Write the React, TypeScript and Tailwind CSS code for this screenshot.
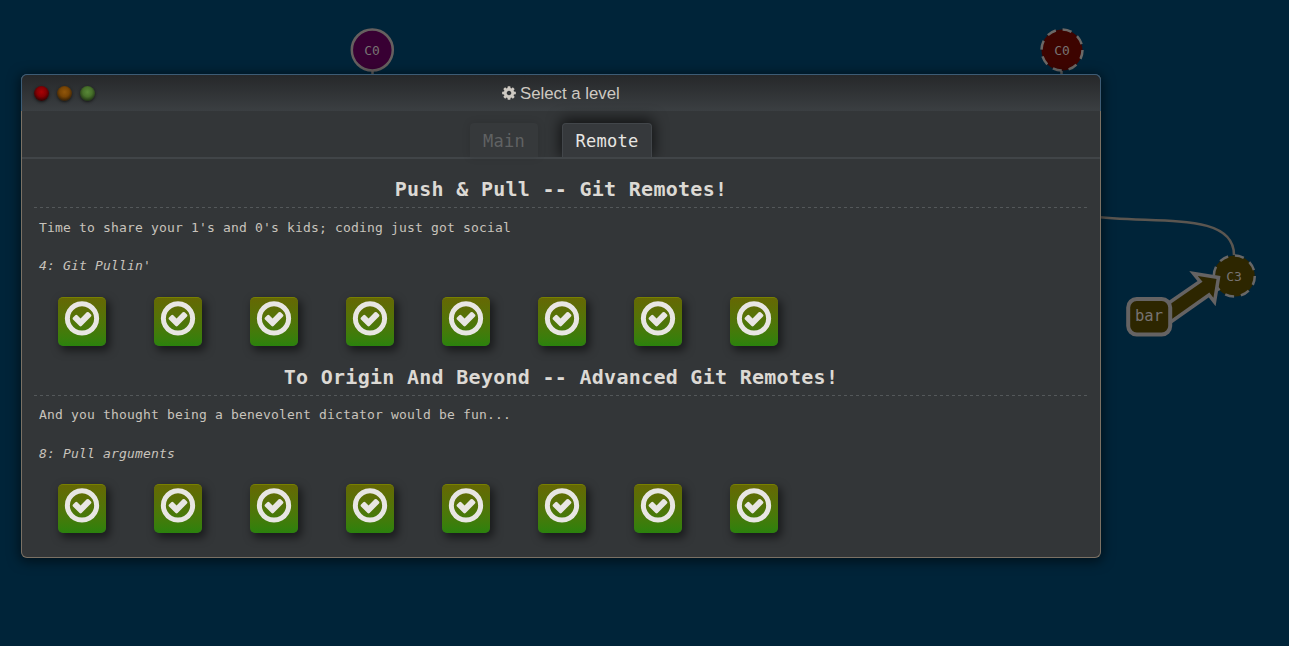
const CHECK =
  'M1299 813l-422 422q-19 19-45 19t-45-19l-294-294q-19-19-19-45t19-45l102-102q19-19 45-19t45 19l147 147 275-275q19-19 45-19t45 19l102 102q19 19 19 45t-19 45zm141 83q0-148-73-273t-198-198-273-73-273 73-198 198-73 273 73 273 198 198 273 73 273-73 198-198 73-273zm224 0q0 209-103 385.5t-279.5 279.5-385.5 103-385.5-103-279.5-279.5-103-385.5 103-385.5 279.5-279.5 385.5-103 385.5 103 279.5 279.5 103 385.5z';

const COG =
  'M1152 896q0-106-75-181t-181-75-181 75-75 181 75 181 181 75 181-75 75-181zm512-109v222q0 12-8 23t-20 13l-185 28q-19 54-39 91 35 50 107 138 10 12 10 25t-9 23q-27 37-99 108t-94 71q-12 0-26-9l-138-108q-44 23-91 38-16 136-29 186-7 28-36 28h-222q-14 0-24.5-8.5t-11.5-21.5l-28-184q-49-16-90-37l-141 107q-10 9-25 9-14 0-25-11-126-114-165-168-7-10-7-23 0-12 8-23 15-21 51-66.5t54-70.5q-27-50-41-99l-183-27q-13-2-21-12.5t-8-23.5v-222q0-12 8-23t19-13l186-28q14-46 39-92-40-57-107-138-10-12-10-24 0-10 9-23 26-36 98.5-107.5t94.5-71.5q13 0 26 10l138 107q44-23 91-38 16-136 29-186 7-28 36-28h222q14 0 24.5 8.5t11.5 21.5l28 184q49 16 90 37l142-107q9-9 24-9 13 0 25 10 129 119 165 170 7 8 7 22 0 12-8 23-15 21-51 66.5t-54 70.5q26 50 41 98l183 28q13 2 21 12.5t8 23.5z';

type Series = { title: string; about: string; level: string };

const SERIES: Series[] = [
  {
    title: 'Push & Pull -- Git Remotes!',
    about: "Time to share your 1's and 0's kids; coding just got social",
    level: "4: Git Pullin'",
  },
  {
    title: 'To Origin And Beyond -- Advanced Git Remotes!',
    about: 'And you thought being a benevolent dictator would be fun...',
    level: '8: Pull arguments',
  },
];

const LEVELS = [1, 2, 3, 4, 5, 6, 7, 8];

function CommitGraph() {
  return (
    <svg
      className="absolute inset-0 font-['DejaVu_Sans_Mono',monospace]"
      width="1289"
      height="646"
      viewBox="0 0 1289 646"
      fill="none"
    >
      <path d="M372.500 71V90M1061.500 71V90" stroke="#5b5b5b" strokeWidth="2.5" />
      <path d="M1090 216C1152 225 1234 210 1234 255" stroke="#5b5650" strokeWidth="2.5" />
      <circle cx="372.3" cy="50" r="20.5" fill="#380033" stroke="#66605f" strokeWidth="2.500" />
      <circle cx="1062" cy="50" r="20.5" fill="#3d0400" stroke="#6b6866" strokeWidth="2.500" strokeDasharray="9.2 6.9" />
      <circle cx="1234.3" cy="276" r="20.5" fill="#2d2600" stroke="#676767" strokeWidth="2.500" strokeDasharray="9.2 6.9" />
      <path
        d="M1160 309L1200 281.500L1193.500 273.500L1218.500 277.500L1214.500 302L1209 295L1163 327.500Z"
        fill="#2d2600"
        stroke="#656363"
        strokeWidth="3.5"
      />
      <rect x="1128.200" y="299" width="42" height="35.500" rx="8.500" fill="#2d2600" stroke="#656363" strokeWidth="4" />
      <g fill="#777372" textAnchor="middle" fontSize="13">
        <text x="372" y="55">C0</text>
        <text x="1062" y="55">C0</text>
        <text x="1234" y="281">C3</text>
        <text x="1149" y="321" fontSize="15.500">bar</text>
      </g>
    </svg>
  );
}

function WindowDots() {
  return (
    <div className="flex w-[479px] gap-2 pl-[11.5px] pt-px">
      <i className="size-[15px] rounded-full bg-[radial-gradient(circle_at_50%_40%,#a90205_0%,#850003_40%,#260404_80%,#1b1b1b_100%)] shadow-[0_1px_3px_#151515]" />
      <i className="size-[15px] rounded-full bg-[radial-gradient(circle_at_50%_40%,#91560a_0%,#794504_40%,#2b1b08_80%,#1b1b1b_100%)] shadow-[0_1px_3px_#151515]" />
      <i className="size-[15px] rounded-full bg-[radial-gradient(circle_at_50%_40%,#588838_0%,#47702a_40%,#1c2e12_80%,#1b1b1b_100%)] shadow-[0_1px_3px_#151515]" />
    </div>
  );
}

function LevelButton() {
  return (
    <button className="flex h-[49px] w-12 justify-center rounded-[5px] border-t border-[#788000] bg-linear-to-b from-[#656804] to-[#2a820d] shadow-[3px_4px_9px_1px_rgba(0,0,0,0.5)]">
      <svg className="shrink-0" width="40" height="40" viewBox="0 -20 1792 1792" fill="#e8e6e3">
        <path d={CHECK} />
      </svg>
    </button>
  );
}

function SeriesBlock({ title, about, level }: Series) {
  return (
    <section className="h-[187.4px] text-[13px] tracking-[0.173px] text-[#c8c3bc]">
      <h2 className="h-[36.2px] pt-[0.25px] text-center text-[20px] font-bold leading-9 tracking-[0.280px] text-[#dcd9d4]">
        {title}
      </h2>
      <div className="h-px bg-[repeating-linear-gradient(90deg,#54585a_0_3px,transparent_3px_6px)]" />
      <p className="mt-[9.8px] pl-[5px] leading-5">{about}</p>
      <p className="mt-[18.2px] pl-[5px] italic leading-5">{level}</p>
      <div className="mt-[20.8px] flex gap-12 pl-6">
        {LEVELS.map((n) => (
          <LevelButton key={n} />
        ))}
      </div>
    </section>
  );
}

export default function App() {
  return (
    <main className="relative h-[646px] w-[1289px] overflow-hidden bg-[#002439] pl-[21px] pt-[74px]">
      <CommitGraph />
      <div className="relative flex h-[484px] w-[1080px] flex-col rounded-[6px] border border-[#7b7164] border-t-[#3d5c75] bg-[#333638] font-['DejaVu_Sans_Mono',monospace] shadow-[0_2px_12px_2px_rgba(0,0,0,0.5)]">
        <header className="-mx-px -mt-px flex h-[37px] shrink-0 items-center rounded-t-[6px] border-x border-t border-[#3d5c75] bg-linear-to-b from-[#26282a] to-[#3b3f42]">
          <WindowDots />
          <div className="flex items-center gap-[3px] pt-px font-['Liberation_Sans',sans-serif] text-[16.8px] leading-5 text-[#cec9c2]">
            <svg className="-mt-[2px]" width="16" height="16" viewBox="0 0 1792 1792" fill="currentColor">
              <path d={COG} />
            </svg>
            Select a level
          </div>
        </header>
        <nav className="flex h-[48px] shrink-0 items-end justify-center gap-[24px] border-b-2 border-[#414548] text-[17px] tracking-[0.266px]">
          <div className="flex h-[34px] w-[68px] items-center justify-center rounded-t-[4px] bg-[#36393b] pt-[3px] text-[#606263] shadow-[0_0_8px_rgba(0,0,0,0.12)]">
            Main
          </div>
          <div className="flex h-[34px] w-[90px] items-center justify-center rounded-t-[4px] border-x border-t border-[#42464a] bg-[#36393c] pt-[3px] text-[#e8e6e3] shadow-[0_-2px_14px_2px_rgba(0,0,0,0.65)] [clip-path:inset(-20px_-20px_0_-20px)]">
            Remote
          </div>
        </nav>
        <div className="px-3 pt-[12px]">
          {SERIES.map((s) => (
            <SeriesBlock key={s.title} {...s} />
          ))}
        </div>
      </div>
    </main>
  );
}
